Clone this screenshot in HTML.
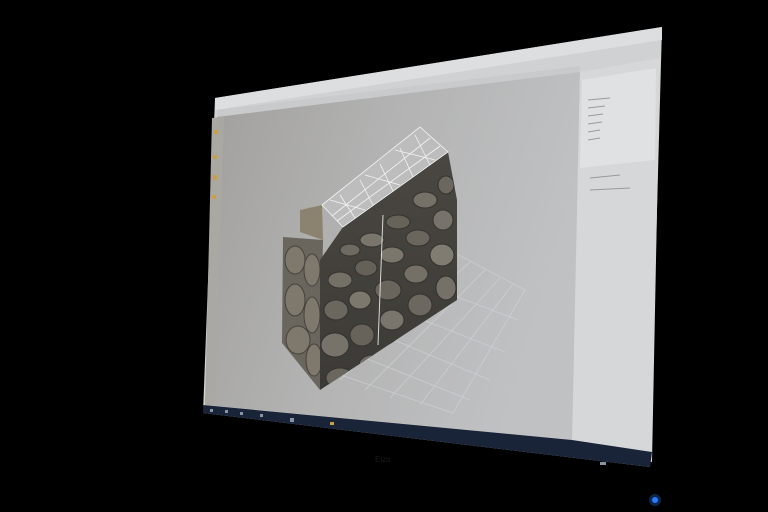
<!DOCTYPE html>
<html><head><style>html,body{margin:0;padding:0;background:#000;width:768px;height:512px;overflow:hidden}</style></head>
<body>
<svg width="768" height="512" viewBox="0 0 768 512" xmlns="http://www.w3.org/2000/svg">
<defs>
<linearGradient id="vp" x1="0" y1="0" x2="1" y2="0.3">
<stop offset="0" stop-color="#a09f9c"/><stop offset="0.5" stop-color="#b3b3b3"/><stop offset="1" stop-color="#c0c1c3"/>
</linearGradient>
<linearGradient id="fr" x1="0" y1="0" x2="0" y2="1">
<stop offset="0" stop-color="#4a4742"/><stop offset="1" stop-color="#3c3a36"/>
</linearGradient>
<clipPath id="front"><polygon points="343,227 448,152 457,200 457,300 320,390 320,260"/></clipPath>
<clipPath id="side"><polygon points="283,237 323,240 320,390 282,343"/></clipPath>
</defs>
<rect width="768" height="512" fill="#000"/>
<polygon points="215,98 662,27 650,467 203,413" fill="#cfd1d3"/>
<polygon points="215,98 662,27 662,40 215,110" fill="#dcdee0"/>
<polygon points="217,110 580,66 580,72 217,117" fill="#c8cacc"/>
<polygon points="217,117 580,72 572,440 205,405" fill="url(#vp)"/>
<polygon points="212,118 224,117 215,405 205,404" fill="#aaa8a2"/>
<g fill="#c9a04a"><rect x="214" y="130" width="4" height="4"/><rect x="213" y="155" width="4" height="4"/><rect x="213" y="175" width="4" height="5"/><rect x="212" y="195" width="4" height="4"/></g>
<polygon points="580,72 660,58 652,462 572,452" fill="#d6d7d9"/>
<polygon points="582,80 656,68 655,160 580,168" fill="#e0e1e3"/>
<g stroke="#9a9a9a" stroke-width="1"><line x1="588" y1="100" x2="610" y2="98"/><line x1="588" y1="108" x2="605" y2="106"/><line x1="588" y1="116" x2="603" y2="114"/><line x1="588" y1="124" x2="602" y2="122"/><line x1="588" y1="132" x2="600" y2="130"/><line x1="588" y1="140" x2="600" y2="138"/><line x1="590" y1="178" x2="620" y2="175"/><line x1="590" y1="190" x2="630" y2="188"/></g>
<polygon points="203,405 572,440 652,452 650,467 203,413" fill="#1a2438"/>
<g fill="#8a93a6"><rect x="210" y="409" width="3" height="3"/><rect x="225" y="410" width="3" height="3"/><rect x="240" y="412" width="3" height="3"/><rect x="260" y="414" width="3" height="3"/><rect x="290" y="418" width="4" height="4"/><rect x="330" y="422" width="4" height="3" fill="#c9a04a"/><rect x="600" y="462" width="6" height="3"/></g>
<g stroke="#d0d2d6" stroke-width="0.8" fill="none" opacity="0.8">
<polygon points="317,367 455,253 525,290 453,413"/>
<line x1="340" y1="380" x2="470" y2="262"/><line x1="365" y1="390" x2="485" y2="270"/><line x1="390" y1="398" x2="500" y2="278"/><line x1="420" y1="405" x2="513" y2="284"/>
<line x1="340" y1="348" x2="470" y2="400"/><line x1="365" y1="328" x2="490" y2="380"/><line x1="390" y1="307" x2="505" y2="352"/><line x1="420" y1="283" x2="518" y2="320"/>
</g>
<polygon points="283,237 323,240 320,390 282,343" fill="#6a665e"/>
<g clip-path="url(#side)" fill="#7e786d" stroke="#45423d" stroke-width="1">
<ellipse cx="295" cy="260" rx="10" ry="14"/><ellipse cx="312" cy="270" rx="8" ry="16"/><ellipse cx="295" cy="300" rx="10" ry="16"/><ellipse cx="312" cy="315" rx="8" ry="18"/><ellipse cx="298" cy="340" rx="12" ry="14"/><ellipse cx="314" cy="360" rx="8" ry="16"/>
</g>
<polygon points="300,210 322,205 323,240 300,232" fill="#8c8270"/>
<polygon points="343,227 448,152 457,200 457,300 320,390 320,260" fill="url(#fr)"/>
<g clip-path="url(#front)" stroke="#34322e" stroke-width="1">
<ellipse cx="350" cy="250" rx="10" ry="6" fill="#6f6a61"/><ellipse cx="372" cy="240" rx="12" ry="7" fill="#7a756b"/><ellipse cx="398" cy="222" rx="12" ry="7" fill="#686359"/><ellipse cx="425" cy="200" rx="12" ry="8" fill="#767167"/><ellipse cx="446" cy="185" rx="8" ry="9" fill="#6c675e"/>
<ellipse cx="340" cy="280" rx="12" ry="8" fill="#757066"/><ellipse cx="366" cy="268" rx="11" ry="8" fill="#666158"/><ellipse cx="392" cy="255" rx="12" ry="8" fill="#7b766c"/><ellipse cx="418" cy="238" rx="12" ry="8" fill="#6b665d"/><ellipse cx="443" cy="220" rx="10" ry="10" fill="#78736a"/>
<ellipse cx="336" cy="310" rx="12" ry="10" fill="#6c675e"/><ellipse cx="360" cy="300" rx="11" ry="9" fill="#7d786e"/><ellipse cx="388" cy="290" rx="13" ry="10" fill="#6a655c"/><ellipse cx="416" cy="274" rx="12" ry="9" fill="#747066"/><ellipse cx="442" cy="255" rx="12" ry="11" fill="#817c72"/>
<ellipse cx="335" cy="345" rx="14" ry="12" fill="#77726a"/><ellipse cx="362" cy="335" rx="12" ry="11" fill="#68635a"/><ellipse cx="392" cy="320" rx="12" ry="10" fill="#7a756c"/><ellipse cx="420" cy="305" rx="12" ry="11" fill="#6d685f"/><ellipse cx="446" cy="288" rx="10" ry="12" fill="#767168"/>
<ellipse cx="340" cy="378" rx="14" ry="10" fill="#6c675e"/><ellipse cx="372" cy="365" rx="13" ry="10" fill="#747067"/><ellipse cx="400" cy="350" rx="12" ry="10" fill="#6a655c"/>
</g>
<line x1="383" y1="215" x2="378" y2="345" stroke="#d8d8d8" stroke-width="1"/>
<polygon points="322,205 420,127 448,152 343,227" fill="#bdbdbd"/>
<g stroke="#f4f4f4" stroke-width="0.8" fill="none">
<polygon points="322,205 420,127 448,152 343,227"/>
<line x1="332" y1="216" x2="430" y2="138"/><line x1="337" y1="221" x2="440" y2="146"/>
<line x1="340" y1="195" x2="355" y2="218"/><line x1="360" y1="180" x2="373" y2="205"/><line x1="380" y1="164" x2="393" y2="191"/><line x1="400" y1="148" x2="413" y2="177"/><line x1="415" y1="135" x2="430" y2="165"/>
<line x1="330" y1="200" x2="365" y2="210"/><line x1="365" y1="175" x2="400" y2="185"/><line x1="395" y1="150" x2="435" y2="160"/>
</g>
<text x="375" y="462" font-family="Liberation Sans, sans-serif" font-size="8" fill="#1c1c1c">Eizo</text>
<circle cx="655" cy="500" r="3" fill="#2a7bff"/>
<circle cx="655" cy="500" r="6" fill="#2a7bff" opacity="0.3"/>
</svg>
</body></html>
